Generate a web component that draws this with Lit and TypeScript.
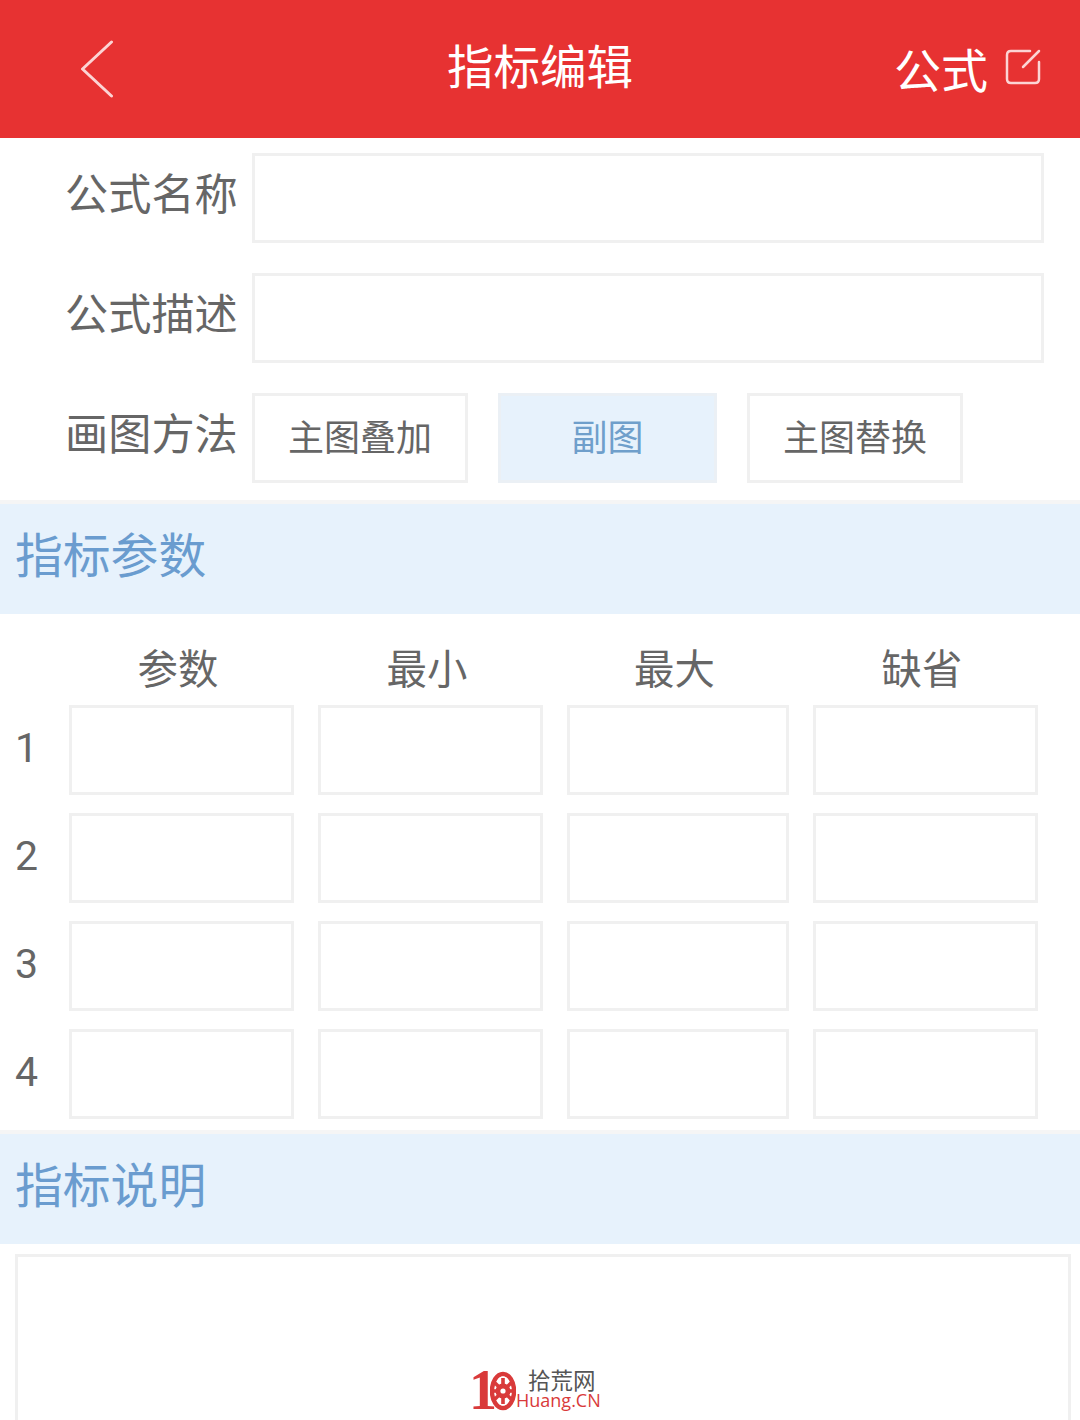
import { LitElement, css, html, svg } from "lit";
import { customElement } from "lit/decorators.js";

const teeth = [0, 45, 90, 135, 180, 225, 270, 315];

@customElement("app-root")
export class AppRoot extends LitElement {
  static styles = css`
    :host {
      display: block;
      position: relative;
      width: 1080px;
      height: 1420px;
      overflow: hidden;
      background: #fff;
      font-family: "Noto Sans CJK SC", "Noto Sans", sans-serif;
      color: #666;
    }
    * { box-sizing: border-box; }
    .header {
      height: 138px;
      background: #e73232;
      color: #fff;
      display: grid;
      grid-template-columns: 1fr auto 1fr;
      align-items: center;
      font-size: 46.5px;
      line-height: 1;
      padding: 0 39px;
    }
    .back { width: 34px; height: 58px; display: block; margin-left: 41px; position: relative; top: 0; }
    .title { position: relative; top: -5px; }
    .right {
      justify-self: end;
      display: flex;
      align-items: center;
      gap: 17px;
    }
    .right span { position: relative; top: -2px; font-size: 47px; }
    .edit { width: 36px; height: 36px; display: block; position: relative; top: -2px; }
    .form {
      padding: 15px 36px 17px 65px;
      display: flex;
      flex-direction: column;
      gap: 30px;
    }
    .row {
      display: grid;
      grid-template-columns: 172px 1fr;
      column-gap: 15px;
      height: 90px;
    }
    .label {
      font-size: 43.2px;
      line-height: 76px;
      white-space: nowrap;
    }
    input, textarea {
      display: block;
      width: 100%;
      height: 100%;
      border: 3px solid #f0f0f0;
      background: #fff;
      outline: none;
      padding: 0;
      margin: 0;
      resize: none;
    }
    .methods { display: flex; gap: 30px; }
    .method {
      width: 216px;
      height: 90px;
      border: 3px solid #f0f0f0;
      display: flex;
      align-items: center;
      justify-content: center;
      font-size: 36px;
      line-height: 1;
      padding-bottom: 6px;
    }
    .method.on {
      width: 219px;
      background: #e7f2fc;
      border-color: #ebf0f5;
      color: #6f9fcb;
    }
    .section {
      height: 114px;
      border-top: 4px solid #f5f5f5;
      background: #e7f2fc;
      background-clip: padding-box;
      color: #6a9ccf;
      font-size: 47.8px;
      line-height: 98px;
      padding-left: 15px;
    }
    .grid {
      display: grid;
      grid-template-columns: 29px 225px 225px 222px 225px;
      grid-template-rows: 45px;
      grid-auto-rows: 90px;
      column-gap: 24px;
      row-gap: 18px;
      padding: 28px 0 11px 16px;
    }
    .head {
      font-size: 40.4px;
      line-height: 50px;
      text-align: center;
      padding-right: 7px;
    }
    .num {
      font-family: Roboto, "Noto Sans", sans-serif;
      font-size: 41px;
      line-height: 86px;
      margin-left: -1px;
    }
    .notes { padding: 10px 9px 0 15px; }
    .notes textarea { height: 260px; }
    .mark {
      position: absolute;
      left: 472px;
      top: 1366px;
      width: 132px;
      height: 48px;
    }
    .one {
      position: absolute;
      left: -3px;
      top: -6px;
      font-family: "Liberation Serif", serif;
      font-weight: 700;
      font-size: 56px;
      line-height: 60px;
      color: #d93a3a;
    }
    .gear { position: absolute; left: 18px; top: 5px; width: 26px; height: 40px; }
    .cn {
      position: absolute;
      left: 56px;
      top: 1px;
      font-size: 22.5px;
      line-height: 24px;
      color: #555;
      white-space: nowrap;
    }
    .en {
      position: absolute;
      left: 44px;
      top: 25px;
      font-family: "Open Sans", sans-serif;
      font-size: 18px;
      line-height: 18px;
      color: #d93a3a;
      white-space: nowrap;
    }
  `;

  render() {
    const cols = ["参数", "最小", "最大", "缺省"];
    return html`
      <div class="header">
        <svg class="back" viewBox="0 0 34 58" fill="none" stroke="#fcd4d4" stroke-width="3" stroke-linecap="round" stroke-linejoin="round">
          <path d="M31.5 2 L2.5 29 L31.5 56" />
        </svg>
        <div class="title">指标编辑</div>
        <div class="right">
          <span>公式</span>
          <svg class="edit" viewBox="0 0 36 36" fill="none" stroke="#fcd4d4" stroke-width="2.5" stroke-linecap="round" stroke-linejoin="round">
            <path d="M25 2 H6 Q2 2 2 6 V30 Q2 34 6 34 H30 Q34 34 34 30 V13" />
            <path d="M18 18 L34 2" />
          </svg>
        </div>
      </div>

      <div class="form">
        <div class="row"><div class="label">公式名称</div><input /></div>
        <div class="row"><div class="label">公式描述</div><input /></div>
        <div class="row">
          <div class="label">画图方法</div>
          <div class="methods">
            <div class="method">主图叠加</div>
            <div class="method on">副图</div>
            <div class="method">主图替换</div>
          </div>
        </div>
      </div>

      <div class="section">指标参数</div>
      <div class="grid">
        <div></div>
        ${cols.map((c) => html`<div class="head">${c}</div>`)}
        ${[1, 2, 3, 4].map(
          (n) => html`
            <div class="num">${n}</div>
            <input /><input /><input /><input />
          `
        )}
      </div>

      <div class="section">指标说明</div>
      <div class="notes"><textarea></textarea></div>

      <div class="mark">
        <span class="one">1</span>
        <svg class="gear" viewBox="0 0 26 40">
          <ellipse cx="13" cy="20" rx="11" ry="17" fill="none" stroke="#d93a3a" stroke-width="4.5" />
          <ellipse cx="13" cy="20" rx="8.6" ry="14.4" fill="#fff" />
          ${teeth.map(
            (a) => svg`<rect x="11.2" y="7" width="3.6" height="7" fill="#d93a3a" transform="rotate(${a} 13 20)" />`
          )}
          <circle cx="13" cy="20" r="7.5" fill="#d93a3a" />
          <circle cx="13" cy="20" r="2.6" fill="#fff" />
        </svg>
        <span class="cn">拾荒网</span>
        <span class="en">Huang.CN</span>
      </div>
    `;
  }
}
